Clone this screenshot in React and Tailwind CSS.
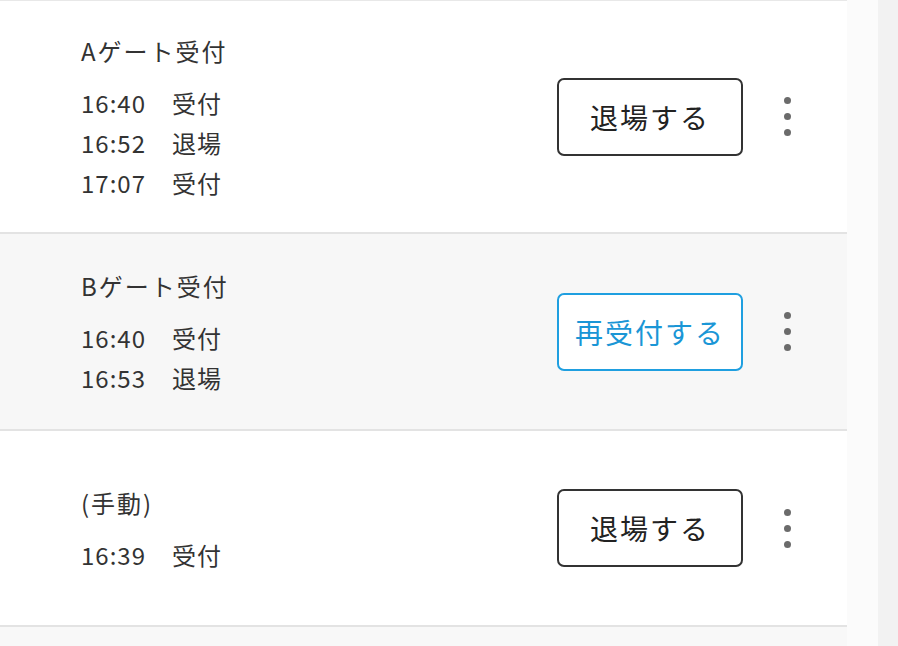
import React from "react";

const font = { fontFamily: '"Noto Sans CJK JP", "Noto Sans", sans-serif' };

function Kebab() {
  return (
    <div className="flex flex-col items-center gap-[9px] w-[8px]">
      <span className="block w-[7px] h-[7px] rounded-full bg-[#6b6b6b]" />
      <span className="block w-[7px] h-[7px] rounded-full bg-[#6b6b6b]" />
      <span className="block w-[7px] h-[7px] rounded-full bg-[#6b6b6b]" />
    </div>
  );
}

function Row({ title, lines, height, bg, button, blue }) {
  return (
    <div
      className={`flex items-center border-b-2 border-[#e3e3e3] ${bg}`}
      style={{ height }}
    >
      <div className="flex-1 pl-[81px] pt-[9px] text-[#333333]">
        <div className="text-[24px] leading-[24px] tracking-[2px]">{title}</div>
        <div className="mt-[20px]">
          {lines.map(([t, l]) => (
            <div key={t} className="flex text-[24px] leading-[40px] tracking-[1px]">
              <span className="w-[91px]">{t}</span>
              <span>{l}</span>
            </div>
          ))}
        </div>
      </div>
      <button
        className={`w-[186px] h-[78px] rounded-[7px] border-2 flex items-center justify-center text-[28px] font-normal tracking-[2px] ${
          blue
            ? "border-[#1f9fe0] text-[#1a96d6] bg-white"
            : "border-[#333333] text-[#222222] bg-white"
        }`}
        style={font}
      >
        {button}
      </button>
      <div className="w-[88px] flex justify-center">
        <Kebab />
      </div>
      <div className="w-[16px]" />
    </div>
  );
}

export default function App() {
  return (
    <div className="w-[898px] h-[646px] flex overflow-hidden" style={font}>
      <div className="w-[847px] h-full bg-[#f8f8f8] flex flex-col">
        <div className="h-[1px] bg-[#e8e8e8]" />
        <Row
          title="Aゲート受付"
          lines={[
            ["16:40", "受付"],
            ["16:52", "退場"],
            ["17:07", "受付"],
          ]}
          height={233}
          bg="bg-white"
          button="退場する"
        />
        <Row
          title="Bゲート受付"
          lines={[
            ["16:40", "受付"],
            ["16:53", "退場"],
          ]}
          height={197}
          bg="bg-[#f7f7f7]"
          button="再受付する"
          blue
        />
        <Row
          title="(手動)"
          lines={[["16:39", "受付"]]}
          height={196}
          bg="bg-white"
          button="退場する"
        />
      </div>
      <div className="w-[31px] h-full bg-[#fbfbfb]" />
      <div className="w-[20px] h-full bg-[#f2f2f2]" />
    </div>
  );
}
